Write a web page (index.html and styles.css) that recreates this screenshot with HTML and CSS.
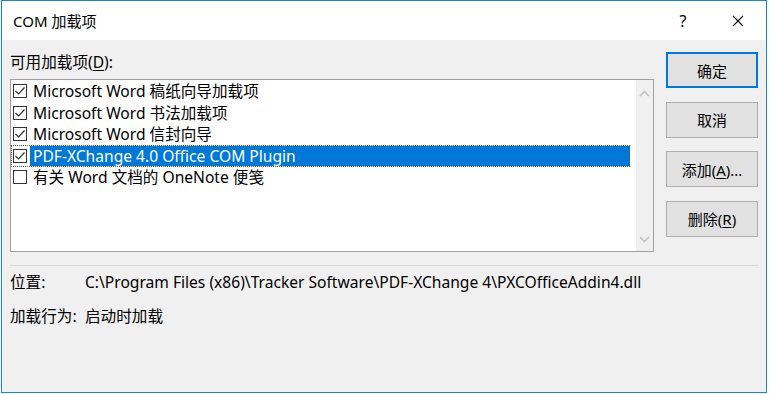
FILE: index.html
```html
<!DOCTYPE html>
<html lang="zh-CN">
<head>
    <meta charset="UTF-8">
    <title>COM 加载项</title>
    <link rel="stylesheet" href="styles.css">
</head>
<body>
    <div class="window">
        <div class="titlebar">
            <span class="title">COM 加载项</span>
            <span class="title-btn help">?</span>
            <span class="title-btn close">
                <svg width="12" height="12" viewBox="0 0 12 12">
                    <path d="M1 1 L11 11 M11 1 L1 11" stroke="#111" stroke-width="1.1" fill="none"/>
                </svg>
            </span>
        </div>

        <div class="main">
            <div class="left">
                <div class="list-label">可用加载项(<u>D</u>):</div>
                <div class="listbox">
                    <div class="items">
                        <div class="item">
                            <span class="check"><svg width="12" height="12" viewBox="0 0 12 12"><path d="M1.5 6 L4.6 9 L10.5 2.5" stroke="#333" stroke-width="1.2" fill="none"/></svg></span>
                            <span class="text">Microsoft Word 稿纸向导加载项</span>
                        </div>
                        <div class="item">
                            <span class="check"><svg width="12" height="12" viewBox="0 0 12 12"><path d="M1.5 6 L4.6 9 L10.5 2.5" stroke="#333" stroke-width="1.2" fill="none"/></svg></span>
                            <span class="text">Microsoft Word 书法加载项</span>
                        </div>
                        <div class="item">
                            <span class="check"><svg width="12" height="12" viewBox="0 0 12 12"><path d="M1.5 6 L4.6 9 L10.5 2.5" stroke="#333" stroke-width="1.2" fill="none"/></svg></span>
                            <span class="text">Microsoft Word 信封向导</span>
                        </div>
                        <div class="item selected">
                            <span class="check"><svg width="12" height="12" viewBox="0 0 12 12"><path d="M1.5 6 L4.6 9 L10.5 2.5" stroke="#333" stroke-width="1.2" fill="none"/></svg></span>
                            <span class="text">PDF-XChange 4.0 Office COM Plugin</span>
                        </div>
                        <div class="item">
                            <span class="check"></span>
                            <span class="text">有关 Word 文档的 OneNote 便笺</span>
                        </div>
                    </div>
                    <div class="scrollbar">
                        <svg width="11" height="7" viewBox="0 0 11 7">
                            <path d="M1 6 L5.5 1.5 L10 6" stroke="#c2c2c2" stroke-width="1.6" fill="none"/>
                        </svg>
                        <svg width="11" height="7" viewBox="0 0 11 7">
                            <path d="M1 1 L5.5 5.5 L10 1" stroke="#c2c2c2" stroke-width="1.6" fill="none"/>
                        </svg>
                    </div>
                </div>
            </div>

            <div class="buttons">
                <button class="btn default">确定</button>
                <button class="btn">取消</button>
                <button class="btn">添加(<u>A</u>)...</button>
                <button class="btn">删除(<u>R</u>)</button>
            </div>
        </div>

        <div class="separator"></div>

        <div class="info">
            <div class="info-row">
                <span class="info-label">位置:</span>
                <span class="info-value">C:\Program Files (x86)\Tracker Software\PDF-XChange 4\PXCOfficeAddin4.dll</span>
            </div>
            <div class="info-row">
                <span class="info-label">加载行为:</span>
                <span class="info-value">启动时加载</span>
            </div>
        </div>
    </div>
</body>
</html>
```

FILE: styles.css
```css
body {
    margin: 0;
    padding: 0;
    background: #ffffff;
    font-family: "Noto Sans", "Noto Sans CJK SC", sans-serif;
    font-size: 15.6px;
    color: #000;
}

.window {
    box-sizing: border-box;
    width: 766px;
    height: 393px;
    margin-left: 1px;
    border: 1px solid #1883d7;
    background: #f0f0f0;
    display: flex;
    flex-direction: column;
}

.titlebar {
    height: 39px;
    background: #fff;
    display: flex;
    align-items: center;
    padding-left: 11px;
}

.title {
    flex: 1;
    font-size: 15px;
}

.title-btn {
    width: 46px;
    height: 39px;
    display: flex;
    align-items: center;
    justify-content: center;
}

.help {
    font-size: 16px;
    margin-right: 9px;
}

.close {
    margin-right: 5px;
}

.main {
    display: flex;
    padding: 12px 0 0 8px;
}

.left {
    width: 644px;
}

.list-label {
    height: 18px;
    line-height: 18px;
    margin-top: 1px;
    margin-bottom: 8px;
}

u {
    text-decoration: underline;
    text-underline-offset: 2px;
}

.listbox {
    box-sizing: border-box;
    height: 173px;
    border: 1px solid #a0a0a0;
    background: #fff;
    display: flex;
}

.items {
    flex: 1;
    padding-top: 0.5px;
}

.item {
    height: 21.5px;
    display: flex;
    align-items: center;
    margin-right: 6px;
}

.check {
    box-sizing: border-box;
    flex-shrink: 0;
    width: 14px;
    height: 14px;
    margin-left: 2px;
    border: 1px solid #333;
    background: #fff;
    display: flex;
}

.text {
    flex: 1;
    height: 20px;
    line-height: 20px;
    margin-left: 3px;
    padding-left: 3px;
    white-space: nowrap;
}

.item.selected {
    outline: 1px dotted #555;
    outline-offset: -1px;
}

.item.selected .text {
    background: #0078d7;
    color: #fff;
}

.scrollbar {
    width: 17px;
    background: #f0f0f0;
    display: flex;
    flex-direction: column;
    align-items: center;
    justify-content: space-between;
    padding: 10px 0 8px;
}

.buttons {
    margin-left: 12px;
    display: flex;
    flex-direction: column;
    gap: 13.5px;
}

.btn {
    box-sizing: border-box;
    width: 92px;
    height: 36px;
    background: #e1e1e1;
    border: 1px solid #adadad;
    font-family: "Noto Sans", "Noto Sans CJK SC", sans-serif;
    font-size: 15px;
    color: #000;
    padding: 0;
}

.btn.default {
    border: 2px solid #0078d7;
}

.separator {
    height: 1px;
    background: #d9d9d9;
    margin: 13px 7px 0 8px;
}

.info {
    padding: 6px 0 0 8px;
    display: flex;
    flex-direction: column;
    gap: 14px;
}

.info-row {
    display: flex;
    height: 20px;
    line-height: 20px;
    white-space: nowrap;
}

.info-label {
    width: 75px;
}
```
